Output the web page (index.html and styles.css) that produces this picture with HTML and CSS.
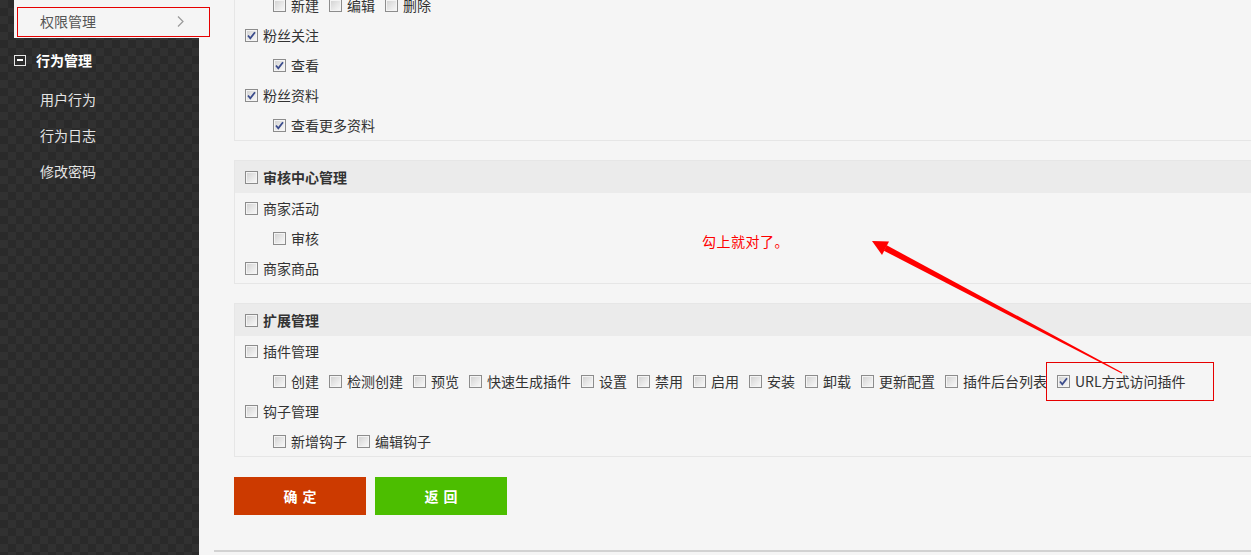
FILE: index.html
```html
<!DOCTYPE html>
<html lang="zh-CN">
<head>
<meta charset="utf-8">
<title>权限管理</title>
<link rel="stylesheet" href="styles.css">
</head>
<body>
<div class="page">
  <aside class="sidebar">
    <div class="nav-active">
      <span>权限管理</span>
      <svg class="chev" width="7" height="11" viewBox="0 0 7 11"><path d="M1 0.5 L6 5.5 L1 10.5" fill="none" stroke="#999" stroke-width="1.2"/></svg>
    </div>
    <div class="nav-group">
      <span class="minus"><i></i></span>
      <span>行为管理</span>
    </div>
    <ul class="nav-sub">
      <li>用户行为</li>
      <li>行为日志</li>
      <li>修改密码</li>
    </ul>
  </aside>

  <main class="main">
    <div class="content">
      <section class="box box-first">
        <div class="row l2">
          <label class="item"><span class="cb"></span>新建</label>
          <label class="item"><span class="cb"></span>编辑</label>
          <label class="item"><span class="cb"></span>删除</label>
        </div>
        <div class="row l1">
          <label class="item"><span class="cb on"><svg viewBox="0 0 11 11"><path d="M2 5.5 L4.3 8.3 L9 2.2" fill="none" stroke="#3b4c8c" stroke-width="1.8"/></svg></span>粉丝关注</label>
        </div>
        <div class="row l2">
          <label class="item"><span class="cb on"><svg viewBox="0 0 11 11"><path d="M2 5.5 L4.3 8.3 L9 2.2" fill="none" stroke="#3b4c8c" stroke-width="1.8"/></svg></span>查看</label>
        </div>
        <div class="row l1">
          <label class="item"><span class="cb on"><svg viewBox="0 0 11 11"><path d="M2 5.5 L4.3 8.3 L9 2.2" fill="none" stroke="#3b4c8c" stroke-width="1.8"/></svg></span>粉丝资料</label>
        </div>
        <div class="row l2">
          <label class="item"><span class="cb on"><svg viewBox="0 0 11 11"><path d="M2 5.5 L4.3 8.3 L9 2.2" fill="none" stroke="#3b4c8c" stroke-width="1.8"/></svg></span>查看更多资料</label>
        </div>
      </section>

      <section class="box">
        <div class="box-head">
          <label class="item"><span class="cb"></span>审核中心管理</label>
        </div>
        <div class="row l1"><label class="item"><span class="cb"></span>商家活动</label></div>
        <div class="row l2"><label class="item"><span class="cb"></span>审核</label></div>
        <div class="row l1"><label class="item"><span class="cb"></span>商家商品</label></div>
      </section>

      <section class="box box-last">
        <div class="box-head">
          <label class="item"><span class="cb"></span>扩展管理</label>
        </div>
        <div class="row l1"><label class="item"><span class="cb"></span>插件管理</label></div>
        <div class="row l2">
          <label class="item"><span class="cb"></span>创建</label>
          <label class="item"><span class="cb"></span>检测创建</label>
          <label class="item"><span class="cb"></span>预览</label>
          <label class="item"><span class="cb"></span>快速生成插件</label>
          <label class="item"><span class="cb"></span>设置</label>
          <label class="item"><span class="cb"></span>禁用</label>
          <label class="item"><span class="cb"></span>启用</label>
          <label class="item"><span class="cb"></span>安装</label>
          <label class="item"><span class="cb"></span>卸载</label>
          <label class="item"><span class="cb"></span>更新配置</label>
          <label class="item"><span class="cb"></span>插件后台列表</label>
          <label class="item"><span class="cb on"><svg viewBox="0 0 11 11"><path d="M2 5.5 L4.3 8.3 L9 2.2" fill="none" stroke="#3b4c8c" stroke-width="1.8"/></svg></span>URL方式访问插件</label>
        </div>
        <div class="row l1"><label class="item"><span class="cb"></span>钩子管理</label></div>
        <div class="row l2">
          <label class="item"><span class="cb"></span>新增钩子</label>
          <label class="item"><span class="cb"></span>编辑钩子</label>
        </div>
      </section>

      <div class="actions">
        <button class="btn btn-ok" type="button">确定</button>
        <button class="btn btn-back" type="button">返回</button>
      </div>
    </div>
    <div class="footer-line"></div>
  </main>

  <div class="annotations">
    <svg class="anno-svg" width="1251" height="555" viewBox="0 0 1251 555">
      <rect x="17.5" y="7.5" width="192" height="29" fill="none" stroke="#e60000" stroke-width="1"/>
      <rect x="1046.5" y="362.5" width="167" height="38" fill="none" stroke="#e60000" stroke-width="1"/>
      <polygon points="886.7,245.3 1122.3,372.5 1121.8,373.5 883.9,250.7" fill="#ff0000"/>
      <polygon points="872,241 889,241.5 882,255" fill="#ff0000"/>
    </svg>
    <div class="anno-text">勾上就对了。</div>
  </div>
</div>
</body>
</html>
```

FILE: styles.css
```css
* {
  box-sizing: border-box;
}

html, body {
  margin: 0;
  padding: 0;
  height: 555px;
  overflow: hidden;
  background: #f5f5f5;
}

body {
  font-family: "Noto Sans CJK SC", "Noto Sans", sans-serif;
  font-size: 14px;
  color: #333;
}

.page {
  position: relative;
  display: flex;
  width: 1251px;
  height: 555px;
  overflow: hidden;
}

/* ---------- sidebar ---------- */
.sidebar {
  flex: 0 0 199px;
  height: 555px;
  background-color: #2c2c2c;
  background-image: repeating-conic-gradient(#2a2a2a 0 25%, #313131 0 50%);
  background-size: 16px 16px;
  padding-left: 14px;
}

.nav-active {
  display: flex;
  align-items: center;
  justify-content: space-between;
  height: 38px;
  padding: 3px 15px 0 26px;
  background: #f5f5f5;
  color: #555;
  line-height: 20px;
}

.chev {
  display: block;
  margin-top: 1px;
}

.nav-group {
  display: flex;
  align-items: center;
  gap: 10px;
  margin-top: 12px;
  height: 20px;
  color: #fff;
  font-weight: bold;
  line-height: 20px;
}

.minus {
  display: flex;
  align-items: center;
  justify-content: center;
  width: 12px;
  height: 11px;
  border: 1px solid #e8e8e8;
  background: #2c2c2c;
}

.minus i {
  display: block;
  width: 6px;
  height: 2px;
  background: #fff;
}

.nav-sub {
  list-style: none;
  margin: 19px 0 0;
  padding: 0 0 0 26px;
  color: #e4e4e4;
}

.nav-sub li {
  height: 20px;
  line-height: 20px;
  margin-bottom: 16px;
}

/* ---------- main ---------- */
.main {
  flex: 1 1 auto;
  display: flex;
  flex-direction: column;
  padding-left: 15px;
}

.content {
  padding-left: 20px;
  margin-right: -20px;
}

.box {
  border: 1px solid #e6e6e6;
  background: #f5f5f5;
  margin-bottom: 19px;
}

.box-first {
  margin-top: -11px;
}

.box-last {
  margin-bottom: 20px;
}

.box-head {
  display: flex;
  align-items: center;
  height: 32px;
  padding-left: 10px;
  background: #ebebeb;
  font-weight: bold;
}

.row {
  display: flex;
  align-items: center;
  height: 30px;
}

.row.l1 {
  padding-left: 10px;
}

.row.l2 {
  padding-left: 38px;
}

.item {
  display: inline-flex;
  align-items: center;
  margin-right: 10px;
  line-height: 20px;
  white-space: nowrap;
  color: #333;
}

.cb {
  display: inline-block;
  flex: 0 0 13px;
  width: 13px;
  height: 13px;
  margin-right: 5px;
  border: 1px solid #8c8c8c;
  background: linear-gradient(135deg, #d0d0d0 0%, #e8e8e8 55%, #fafafa 100%);
  box-shadow: inset 0 0 0 1px #f4f4f4;
  position: relative;
}

.cb svg {
  position: absolute;
  left: 0;
  top: 0;
  width: 11px;
  height: 11px;
}

.actions {
  display: flex;
  gap: 9px;
}

.btn {
  width: 132px;
  height: 38px;
  border: none;
  padding: 0;
  color: #fff;
  font-family: "Noto Sans CJK SC", "Noto Sans", sans-serif;
  font-size: 14px;
  font-weight: bold;
  letter-spacing: 5px;
  text-indent: 5px;
  cursor: pointer;
}

.btn-ok {
  background: #cc3a00;
}

.btn-back {
  background: #4cbe00;
}

.footer-line {
  margin-top: 35px;
  height: 2px;
  background: #d2d2d2;
}

/* ---------- annotations ---------- */
.annotations {
  position: absolute;
  left: 0;
  top: 0;
  width: 1251px;
  height: 555px;
  pointer-events: none;
}

.anno-svg {
  position: absolute;
  left: 0;
  top: 0;
}

.anno-text {
  position: absolute;
  left: 702px;
  top: 231px;
  color: #ff0000;
  font-size: 14px;
  line-height: 20px;
  letter-spacing: 0.5px;
}
```
